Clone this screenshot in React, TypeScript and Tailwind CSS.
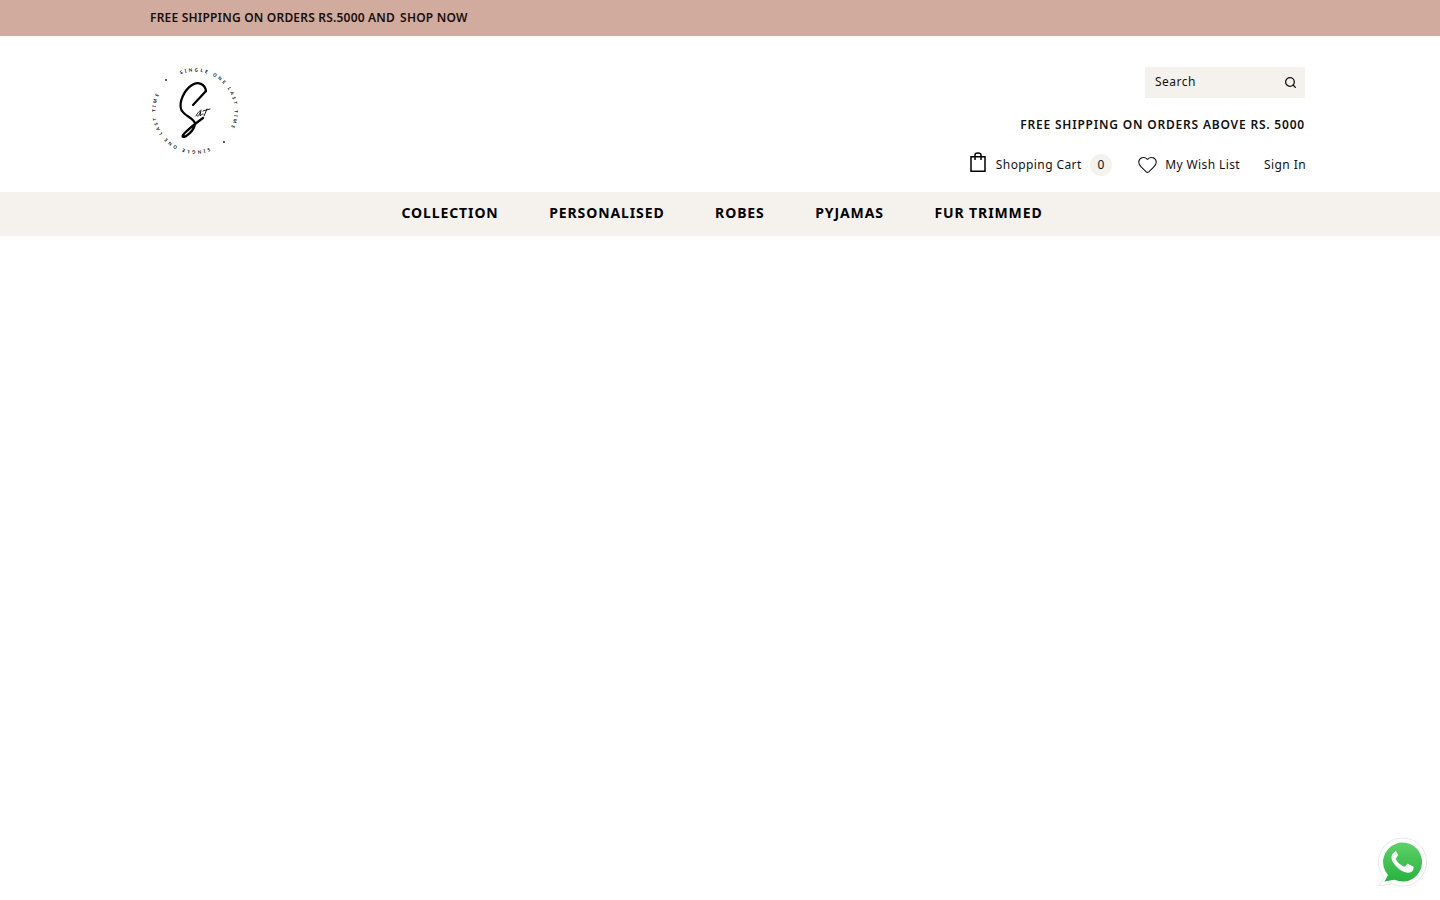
import { Search, Heart } from 'lucide-react'

const NAV = ['COLLECTION', 'PERSONALISED', 'ROBES', 'PYJAMAS', 'FUR TRIMMED']

function Logo() {
  return (
    <svg width="90" height="90" viewBox="0 0 90 90" className="block">
      <defs>
        <path id="ringTop" d="M 45 45 m -39.5 0 a 39.5 39.5 0 1 1 79 0 a 39.5 39.5 0 1 1 -79 0" />
        <path id="ringBottom" d="M 45 45 m 39.5 0 a 39.5 39.5 0 1 1 -79 0 a 39.5 39.5 0 1 1 79 0" />
      </defs>
      <text fontSize="4.6" fontWeight="600" fontFamily="'Noto Sans', sans-serif" fill="#000" letterSpacing="2.2">
        <textPath href="#ringTop" startOffset="19%">SINGLE ONE LAST TIME</textPath>
        <textPath href="#ringBottom" startOffset="19%">SINGLE ONE LAST TIME</textPath>
      </text>
      <circle cx="16" cy="14" r="0.9" fill="#111" />
      <circle cx="74" cy="76" r="0.9" fill="#111" />
      {/* script S */}
      <path
        d="M56 25 C55 18 48 15 42 19 C34 24 29 36 31 43 C33 50 45 52 45 58 C44 65 36 71 33 71 C30 70 42 60 53 52"
        fill="none"
        stroke="#000"
        strokeWidth="2.2"
        strokeLinecap="round"
      />
      <path d="M56 25 L43 39" fill="none" stroke="#000" strokeWidth="2.2" strokeLinecap="round" />
      <path
        d="M46 50 C48 46 51 43 50 47 C49 50 46 50 48 50 M51 44 L50 50 C51 49 52 48 53 48 M53 45 L60 43 M57 43 L54 50"
        fill="none"
        stroke="#000"
        strokeWidth="0.9"
        strokeLinecap="round"
      />
    </svg>
  )
}

function CartBag() {
  return (
    <svg width="16" height="20" viewBox="0 0 16 20" className="block" fill="none" stroke="#000" strokeWidth="1.5">
      <rect x="1" y="4.75" width="14" height="14.5" />
      <path d="M5 8 V3 C5 1.6 6 0.9 8 0.9 C10 0.9 11 1.6 11 3 V8" />
    </svg>
  )
}

function WhatsApp() {
  return (
    <svg width="50" height="52" viewBox="0 0 50 52" className="block">
      <defs>
        <linearGradient id="waGreen" x1="0" y1="0" x2="0" y2="1">
          <stop offset="0" stopColor="#5fd168" />
          <stop offset="1" stopColor="#27b33f" />
        </linearGradient>
      </defs>
      <path
        d="M1 49 L7.6 41 A24 24 0 1 1 15.6 46.9 Z"
        fill="#fff"
        stroke="#ebe6e9"
        strokeWidth="1"
      />
      <path d="M7.5 44.5 L11 38 A19.5 19.5 0 1 1 17.5 42.8 Z" fill="url(#waGreen)" />
      <path
        transform="translate(25.5 25) scale(0.88) translate(-25.3 -26.3)"
        d="M18.2 14.2 C17.4 14.2 16.2 14.6 15.2 15.7 C14.2 16.8 12.8 18.4 12.8 21.2 C12.8 24.4 15.2 27.6 15.6 28.1 C16 28.6 19.8 34.8 26 37 C31.2 38.9 32.6 38.4 33.8 38.2 C35.4 37.9 37.2 36.4 37.6 34.8 C38 33.2 38 31.9 37.8 31.6 C37.6 31.3 37.2 31.2 36.4 30.8 L32 28.6 C31.3 28.3 30.8 28.2 30.3 28.9 L28.4 31.2 C28 31.7 27.6 31.8 26.9 31.4 C26.2 31 24 30.3 21.4 28 C19.4 26.2 18.1 24 17.7 23.3 C17.3 22.6 17.7 22.2 18 21.8 L19.2 20.4 C19.6 19.9 19.7 19.5 20 19 C20.2 18.5 20.1 18 19.9 17.6 L18.4 14.9 C18.3 14.5 18.5 14.2 18.2 14.2 Z"
        fill="#fff"
      />
    </svg>
  )
}

export default function App() {
  return (
    <div className="relative min-h-[900px] bg-white text-[#111] font-['Noto_Sans',sans-serif]">
      <div className="flex h-9 items-center bg-[#d1ab9e] pl-[150px] text-xs font-semibold tracking-[0.2px] text-[#1a0f0b]">
        <span>FREE SHIPPING ON ORDERS RS.5000 AND</span>
        <span className="ml-[5px]">SHOP NOW</span>
      </div>

      <header className="flex h-[156px] justify-between pl-[150px] pr-[135px]">
        <div className="pt-[30px]">
          <Logo />
        </div>
        <div className="flex flex-col items-end pt-[31px]">
          <div className="flex h-[31px] w-40 items-center justify-between bg-[#f5f1ec] pl-2.5 pr-[8px]">
            <span className="-mt-0.5 text-xs tracking-[0.5px]">Search</span>
            <Search size={13} strokeWidth={2.4} />
          </div>
          <div className="mt-[18px] text-xs font-semibold leading-[18px] tracking-[0.8px]">
            FREE SHIPPING ON ORDERS ABOVE RS. 5000
          </div>
          <div className="-mr-px mt-5 flex items-center text-xs tracking-[0.4px]">
            <div className="-mt-1.5">
              <CartBag />
            </div>
            <span className="ml-2.5">Shopping Cart</span>
            <span className="ml-[8.5px] flex h-[22px] w-[22px] items-center justify-center rounded-full bg-[#f5f1ec] text-xs">
              0
            </span>
            <Heart size={21} strokeWidth={1.2} className="-mt-0.5 ml-[25px]" />
            <span className="ml-[7px]">My Wish List</span>
            <span className="ml-6">Sign In</span>
          </div>
        </div>
      </header>

      <nav className="flex h-11 items-center justify-center gap-[50.5px] bg-[#f5f1ec] pb-0.5 pl-1 text-sm font-bold tracking-[0.9px] text-black">
        {NAV.map((item) => (
          <a key={item} href="#">
            {item}
          </a>
        ))}
      </nav>

      <div className="absolute left-[1377px] top-[837px]">
        <WhatsApp />
      </div>
    </div>
  )
}
